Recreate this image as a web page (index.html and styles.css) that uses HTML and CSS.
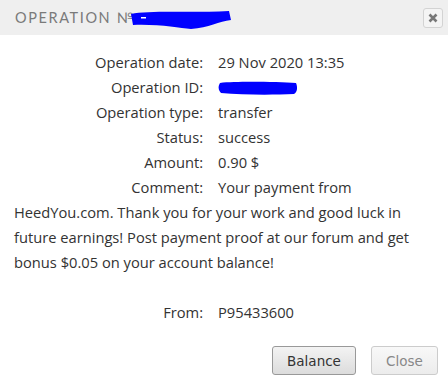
FILE: index.html
```html
<!DOCTYPE html>
<html>
<head>
    <title>Operation</title>
    <link rel="stylesheet" href="styles.css">
</head>
<body>
    <div class="dialog">
        <div class="dialog-head">
            <span class="dialog-title">Operation №</span>
            <svg class="scribble-title" width="104" height="22" viewBox="0 0 104 22">
                <path d="M2 6 C20 2 60 5 100 3 L102 12 C90 13 80 20 62 21 C50 20 30 16 4 17 Z" fill="#0000ff"/>
                <rect x="12" y="9" width="5" height="1.5" fill="#fff"/>
            </svg>
            <button class="btn-x" type="button">
                <svg width="10" height="10" viewBox="0 0 10 10"><path d="M1.5 1.5 L8.5 8.5 M8.5 1.5 L1.5 8.5" stroke="#777" stroke-width="2.6"/></svg>
            </button>
        </div>
        <div class="dialog-body">
            <div class="row"><span class="lbl">Operation date:</span>29 Nov 2020 13:35</div>
            <div class="row"><span class="lbl">Operation ID:</span><svg class="scribble-id" width="80" height="16" viewBox="0 0 80 16"><path d="M2 3 C20 1 60 2 78 3 C80 8 79 12 76 14 C55 15 25 15 3 13 C0 10 0 6 2 3 Z" fill="#0000ff"/></svg></div>
            <div class="row"><span class="lbl">Operation type:</span>transfer</div>
            <div class="row"><span class="lbl">Status:</span>success</div>
            <div class="row"><span class="lbl">Amount:</span>0.90 $</div>
            <div class="row"><span class="lbl">Comment:</span>Your payment from HeedYou.com. Thank you for your work and good luck in future earnings! Post payment proof at our forum and get bonus $0.05 on your account balance!</div>
            <div class="row row-from"><span class="lbl">From:</span>P95433600</div>
        </div>
        <div class="dialog-foot">
            <button class="btn" type="button">Balance</button>
            <button class="btn btn-off" type="button">Close</button>
        </div>
    </div>
</body>
</html>
```

FILE: styles.css
```css
body {
    margin: 0;
    background: #fff;
    font-family: "Open Sans", sans-serif;
    color: #333;
}
.dialog {
    width: 448px;
    height: 383px;
}
.dialog-head {
    height: 35px;
    background: #efefef;
    display: flex;
    align-items: center;
    padding: 0 5px 0 15px;
}
.dialog-title {
    font-family: "Lato", sans-serif;
    font-size: 14.5px;
    text-transform: uppercase;
    letter-spacing: 1.6px;
    color: #7a7a7a;
}
.scribble-title {
    margin-left: -6px;
    margin-top: 2px;
}
.btn-x {
    margin-left: auto;
    width: 20px;
    height: 20px;
    padding: 0;
    border: 1px solid #d3d3d3;
    border-radius: 3px;
    background: #f4f4f4;
    display: flex;
    align-items: center;
    justify-content: center;
}
.dialog-body {
    padding: 15px 14px 0;
    font-size: 14.7px;
    line-height: 25px;
}
.lbl {
    display: inline-block;
    width: 189px;
    margin-right: 15px;
    text-align: right;
}
.scribble-id {
    vertical-align: -3px;
}
.row-from {
    margin-top: 25px;
}
.dialog-foot {
    display: flex;
    justify-content: flex-end;
    gap: 15px;
    padding: 21px 10px 0;
}
.btn {
    font-family: "DejaVu Sans", Verdana, sans-serif;
    font-size: 13.5px;
    color: #333;
    width: 84px;
    height: 29px;
    border: 1px solid #999;
    border-radius: 3px;
    background: linear-gradient(#f3f3f3, #dcdcdc);
}
.btn-off {
    width: 67px;
    color: #888;
    border-color: #ccc;
    background: linear-gradient(#f8f8f8, #ececec);
}
```
